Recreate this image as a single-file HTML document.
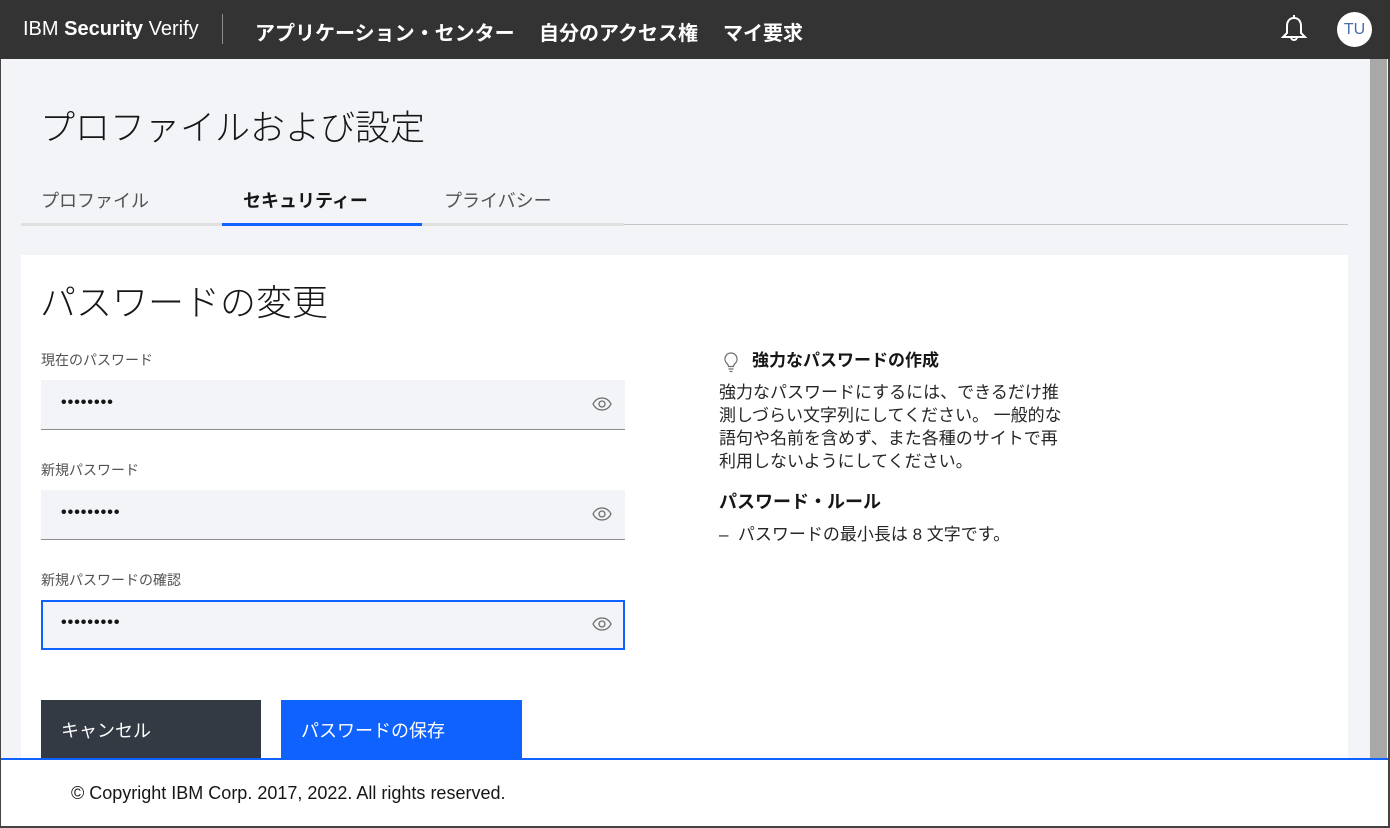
<!DOCTYPE html>
<html><head><meta charset="utf-8"><style>
*{box-sizing:border-box;margin:0;padding:0}
body{width:1390px;height:828px;overflow:hidden;position:relative;background:#f2f4f8;font-family:"Liberation Sans","Noto Sans CJK JP",sans-serif;color:#161616}
.abs{position:absolute}
.hdr{left:0;top:0;width:1390px;height:59px;background:#333333;color:#fff}
.brand{left:23px;top:18px;font-size:20px;color:#fff;white-space:nowrap}
.sep{left:222px;top:14px;width:1px;height:30px;background:#8d8d8d}
.nav{top:17px;font-size:20px;font-weight:bold;color:#fff;white-space:nowrap}
.avatar{left:1337px;top:12px;width:35px;height:35px;border-radius:50%;background:#fff;color:#4a6da7;font-size:16px;text-align:center;line-height:35px}
.scroll{left:1370px;top:59px;width:17px;height:700px;background:#a8a8a8}
.title{left:40px;top:100px;font-size:35px;font-weight:300;white-space:nowrap}
.tab{top:187px;font-size:18px;color:#525252;white-space:nowrap}
.card{left:21px;top:255px;width:1327px;height:510px;background:#fff}
.lbl{left:41px;font-size:14px;color:#525252;white-space:nowrap}
.inp{left:41px;width:584px;height:50px;background:#f2f4f8;border-bottom:1px solid #8d8d8d}
.dots{position:absolute;left:20px;top:14px;font-size:16px;letter-spacing:1px;font-weight:bold}
.eye{position:absolute;right:13px;top:16px}
.tip{left:719px;font-size:17px;color:#262626;line-height:23px}
.btn{top:700px;height:58px;color:#fff;font-size:18px;padding:17px 20px;white-space:nowrap}
.foot{left:1px;top:758px;width:1387px;height:69px;background:#fff;border-top:2px solid #0f62fe}
</style></head><body>
<div class="abs hdr"></div>
<div class="abs brand">IBM <b>Security</b> Verify</div>
<div class="abs sep"></div>
<div class="abs nav" style="left:255px">アプリケーション・センター</div>
<div class="abs nav" style="left:539px">自分のアクセス権</div>
<div class="abs nav" style="left:723px">マイ要求</div>
<svg class="abs" style="left:1281px;top:13px" width="26" height="32" viewBox="0 0 26 32" fill="none" stroke="#fff" stroke-width="2"><path d="M13 2v3M13 5c-5 0-7 4-7 8v7l-4 4h22l-4-4v-7c0-4-2-8-7-8zM10 24a3 3 0 0 0 6 0"/></svg>
<div class="abs avatar">TU</div>
<div class="abs scroll"></div>
<div class="abs title">プロファイルおよび設定</div>
<div class="abs tab" style="left:41px">プロファイル</div>
<div class="abs tab" style="left:243px;font-weight:bold;color:#161616">セキュリティー</div>
<div class="abs tab" style="left:444px">プライバシー</div>
<div class="abs" style="left:21px;top:224px;width:1327px;height:1px;background:#c6c6c6"></div>
<div class="abs" style="left:21px;top:223px;width:603px;height:3px;background:#e0e0e0"></div>
<div class="abs" style="left:222px;top:223px;width:200px;height:3px;background:#0f62fe"></div>
<div class="abs card"></div>
<div class="abs" style="left:40px;top:274px;font-size:36px;font-weight:300;white-space:nowrap">パスワードの変更</div>
<div class="abs lbl" style="top:350px">現在のパスワード</div>
<div class="abs inp" style="top:380px"><span class="dots">••••••••</span><svg class="eye" width="20" height="16" viewBox="0 0 20 16" fill="none" stroke="#6f6f6f" stroke-width="1.3"><path d="M1 8c2-4 5-6 9-6s7 2 9 6c-2 4-5 6-9 6s-7-2-9-6z"/><circle cx="10" cy="8" r="3"/></svg></div>
<div class="abs lbl" style="top:460px">新規パスワード</div>
<div class="abs inp" style="top:490px"><span class="dots">•••••••••</span><svg class="eye" width="20" height="16" viewBox="0 0 20 16" fill="none" stroke="#6f6f6f" stroke-width="1.3"><path d="M1 8c2-4 5-6 9-6s7 2 9 6c-2 4-5 6-9 6s-7-2-9-6z"/><circle cx="10" cy="8" r="3"/></svg></div>
<div class="abs lbl" style="top:570px">新規パスワードの確認</div>
<div class="abs inp" style="top:600px;border:2px solid #0f62fe"><span class="dots" style="left:18px;top:12px">•••••••••</span><svg class="eye" style="right:11px;top:14px" width="20" height="16" viewBox="0 0 20 16" fill="none" stroke="#6f6f6f" stroke-width="1.3"><path d="M1 8c2-4 5-6 9-6s7 2 9 6c-2 4-5 6-9 6s-7-2-9-6z"/><circle cx="10" cy="8" r="3"/></svg></div>
<svg class="abs" style="left:722px;top:351px" width="18" height="22" viewBox="0 0 18 22" fill="none" stroke="#6f6f6f" stroke-width="1.3"><path d="M9 2a6 6 0 0 0-4 10.5c1 1 1.5 2 1.5 3h5c0-1 .5-2 1.5-3A6 6 0 0 0 9 2zM6.5 18h5M7.5 20.5h3"/></svg>
<div class="abs tip" style="left:752px;top:349px;font-weight:bold;color:#161616">強力なパスワードの作成</div>
<div class="abs tip" style="top:381px;width:400px">強力なパスワードにするには、できるだけ推<br>測しづらい文字列にしてください。 一般的な<br>語句や名前を含めず、また各種のサイトで再<br>利用しないようにしてください。</div>
<div class="abs tip" style="top:491px;font-weight:bold;font-size:18px;color:#161616">パスワード・ルール</div>
<div class="abs tip" style="top:523px;white-space:nowrap">–&nbsp; パスワードの最小長は 8 文字です。</div>
<div class="abs btn" style="left:41px;width:220px;background:#343a44">キャンセル</div>
<div class="abs btn" style="left:281px;width:241px;background:#0f62fe">パスワードの保存</div>
<div class="abs foot"></div>
<div class="abs" style="left:71px;top:783px;font-size:18px;color:#161616;white-space:nowrap">© Copyright IBM Corp. 2017, 2022. All rights reserved.</div>
<div class="abs" style="left:0;top:59px;width:1px;height:769px;background:#444"></div>
<div class="abs" style="left:1388px;top:59px;width:2px;height:769px;background:#444"></div>
<div class="abs" style="left:0;top:826px;width:1390px;height:2px;background:#444"></div>
</body></html>
